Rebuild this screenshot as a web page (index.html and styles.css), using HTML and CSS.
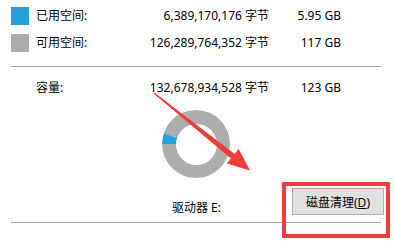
FILE: index.html
```html
<!DOCTYPE html>
<html lang="zh-CN">
<head>
<meta charset="utf-8">
<title>驱动器 E: 属性</title>
<link rel="stylesheet" href="styles.css">
</head>
<body>
<div class="page">
  <div class="legend">
    <div class="row">
      <span class="swatch used"></span>
      <span class="label">已用空间:</span>
      <span class="bytes">6,389,170,176 字节</span>
      <span class="size">5.95 GB</span>
    </div>
    <div class="row">
      <span class="swatch free"></span>
      <span class="label">可用空间:</span>
      <span class="bytes">126,289,764,352 字节</span>
      <span class="size">117 GB</span>
    </div>
  </div>
  <div class="sep"></div>
  <div class="row capacity">
    <span class="swatch none"></span>
    <span class="label">容量:</span>
    <span class="bytes">132,678,934,528 字节</span>
    <span class="size">123 GB</span>
  </div>
  <div class="chart">
    <div class="donut"><div class="hole"></div></div>
  </div>
  <div class="drive-row">
    <span class="drive">驱动器 E:</span>
    <button class="btn" type="button">磁盘清理(<u>D</u>)</button>
  </div>
  <div class="sep"></div>

  <div class="highlight"></div>
  <svg class="arrow" width="395" height="245" viewBox="0 0 395 245">
    <polygon points="154.3,92.4 234.7,153.9 238.6,148.8 250,170.5 226.8,163.4 230.9,158.5 153.5,93.6" fill="#f23b3b"/>
  </svg>
</div>
</body>
</html>
```

FILE: styles.css
```css
html, body {
  margin: 0;
  padding: 0;
  background: #ffffff;
}

.page {
  position: relative;
  width: 395px;
  height: 245px;
  overflow: hidden;
  padding: 7px 0 0 11px;
  box-sizing: border-box;
  font-family: "Noto Sans", "Noto Sans CJK SC", sans-serif;
  font-size: 12px;
  color: #000;
}

.legend {
  display: flex;
  flex-direction: column;
  gap: 9px;
}

.row {
  display: grid;
  grid-template-columns: 18px 111px 129px 72px;
  height: 18px;
  align-items: center;
  line-height: 18px;
}

.swatch {
  width: 18px;
  height: 18px;
}
.swatch.used { background: #26a0da; }
.swatch.free { background: #adadad; }

.label {
  padding-left: 7px;
}

.bytes, .size {
  text-align: right;
  white-space: nowrap;
}

.sep {
  width: 370px;
  height: 1px;
  background: #a0a0a0;
  margin-top: 14px;
}

.capacity {
  margin-top: 12px;
}

.chart {
  margin-top: 13px;
  padding-left: 151px;
}

.donut {
  width: 68px;
  height: 68px;
  border-radius: 50%;
  background: conic-gradient(from 270deg, #26a0da 0deg 17.4deg, #adadad 17.4deg 360deg);
  display: flex;
  align-items: center;
  justify-content: center;
}

.hole {
  width: 41px;
  height: 41px;
  border-radius: 50%;
  background: #fff;
}

.drive-row {
  display: flex;
  height: 27px;
  margin-top: 10px;
  width: 373px;
}

.drive {
  align-self: flex-end;
  margin-left: 161px;
  line-height: 14px;
  margin-bottom: 0px;
  white-space: nowrap;
}

.btn {
  margin-left: auto;
  width: 92px;
  height: 27px;
  background: #e1e1e1;
  border: 1px solid #adadad;
  font-family: inherit;
  font-size: 12px;
  color: #000;
  padding: 0;
}

.drive-row + .sep {
  margin-top: 7px;
}

.highlight {
  position: absolute;
  left: 282px;
  top: 182px;
  width: 108px;
  height: 56px;
  box-sizing: border-box;
  border: 4px solid #f23b3b;
}

.arrow {
  position: absolute;
  left: 0;
  top: 0;
  pointer-events: none;
}
```
